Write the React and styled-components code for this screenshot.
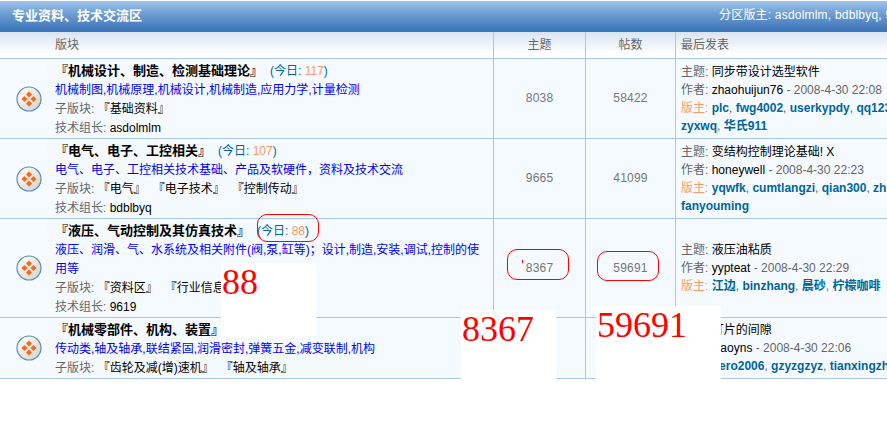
import { createGlobalStyle } from "styled-components";
import styled from "styled-components";

const forums = [
  {
    height: 80,
    title: "『机械设计、制造、检测基础理论』",
    today: 117,
    desc: "机械制图,机械原理,机械设计,机械制造,应用力学,计量检测",
    subs: ["『基础资料』"],
    lead: "asdolmlm",
    topics: 8038,
    posts: 58422,
    subject: "同步带设计选型软件",
    author: "zhaohuijun76",
    date: "2008-4-30 22:08",
    mods: ["plc", "fwg4002", "userkypdy", "qq123456"],
    mods2: ["zyxwq", "华氏911"],
  },
  {
    height: 80,
    title: "『电气、电子、工控相关』",
    today: 107,
    desc: "电气、电子、工控相关技术基础、产品及软硬件，资料及技术交流",
    subs: ["『电气』", "『电子技术』", "『控制传动』"],
    lead: "bdblbyq",
    topics: 9665,
    posts: 41099,
    subject: "变结构控制理论基础! X",
    author: "honeywell",
    date: "2008-4-30 22:23",
    mods: ["yqwfk", "cumtlangzi", "qian300", "zhouyu"],
    mods2: ["fanyouming"],
  },
  {
    height: 99,
    title: "『液压、气动控制及其仿真技术』",
    today: 88,
    desc: "液压、润滑、气、水系统及相关附件(阀,泵,缸等)；设计,制造,安装,调试,控制的使用等",
    subs: ["『资料区』", "『行业信息』"],
    lead: "9619",
    topics: 8367,
    posts: 59691,
    subject: "液压油粘质",
    author: "yypteat",
    date: "2008-4-30 22:29",
    mods: ["江边", "binzhang", "晨砂", "柠檬咖啡"],
  },
  {
    height: 61,
    title: "『机械零部件、机构、装置』",
    today: 52,
    desc: "传动类,轴及轴承,联结紧固,润滑密封,弹簧五金,减变联制,机构",
    subs: ["『齿轮及减(增)速机』", "『轴及轴承』"],
    topics: 7120,
    posts: 40236,
    subject: "打片的间隙",
    author: "xiaoyns",
    date: "2008-4-30 22:06",
    mods: ["hero2006", "gzyzgzyz", "tianxingzhe"],
  },
];

function ForumIcon() {
  return (
    <svg width="26" height="26" viewBox="0 0 26 26">
      <defs>
        <linearGradient id="knob" x1="0" y1="0" x2="1" y2="1">
          <stop offset="0" stopColor="#ffffff" />
          <stop offset="1" stopColor="#d4d2d0" />
        </linearGradient>
      </defs>
      <circle cx="13" cy="13" r="12" fill="url(#knob)" stroke="#5f8fa8" strokeWidth="1.2" />
      <g fill="#f9690e">
        <path d="M13 5.5l3 3-3 3-3-3z" />
        <path d="M13 14.5l3 3-3 3-3-3z" />
        <path d="M8.5 10l3 3-3 3-3-3z" />
        <path d="M17.5 10l3 3-3 3-3-3z" />
      </g>
    </svg>
  );
}

function Mods({ names }) {
  return names.map((n, i) => (
    <span key={n}>
      {i > 0 && ", "}
      <ModName>{n}</ModName>
    </span>
  ));
}

export default function App() {
  return (
    <Page>
      <GlobalStyle />
      <Banner>
        <BannerTitle>专业资料、技术交流区</BannerTitle>
        <BannerMods>分区版主: asdolmlm, bdblbyq, 9619</BannerMods>
      </Banner>
      <Board>
        <colgroup>
          <col width="55" />
          <col width="439" />
          <col width="92" />
          <col width="90" />
          <col width="211" />
        </colgroup>
        <thead>
          <tr>
            <HeadCell colSpan={2} $pad>
              版块
            </HeadCell>
            <HeadCell $center>主题</HeadCell>
            <HeadCell $center>帖数</HeadCell>
            <HeadCell $last>最后发表</HeadCell>
          </tr>
        </thead>
        <tbody>
          {forums.map((f) => (
            <Row key={f.title} $height={f.height}>
              <IconCell>
                <ForumIcon />
              </IconCell>
              <ForumCell>
                <Line>
                  <ForumTitle>{f.title}</ForumTitle>
                  <Today>
                    (今日: <em>{f.today}</em>)
                  </Today>
                </Line>
                <Desc>{f.desc}</Desc>
                <Line>
                  子版块:{" "}
                  <SubList>
                    {f.subs.map((s) => (
                      <Dark key={s}>{s}</Dark>
                    ))}
                  </SubList>
                </Line>
                {f.lead && (
                  <Line>
                    技术组长: <Dark>{f.lead}</Dark>
                  </Line>
                )}
              </ForumCell>
              <CountCell>{f.topics}</CountCell>
              <CountCell>{f.posts}</CountCell>
              <LastCell>
                <LastLine>
                  主题: <Dark>{f.subject}</Dark>
                </LastLine>
                <LastLine>
                  作者: <Dark>{f.author}</Dark> - {f.date}
                </LastLine>
                <LastLine>
                  <Orange>版主:</Orange> <Mods names={f.mods} />
                </LastLine>
                {f.mods2 && (
                  <LastLine>
                    <Mods names={f.mods2} />
                  </LastLine>
                )}
              </LastCell>
            </Row>
          ))}
        </tbody>
      </Board>

      <Ring $x={257} $y={214} $w={62} $h={28} />
      <Ring $x={507} $y={249} $w={62} $h={31} />
      <Ring $x={597} $y={251} $w={62} $h={30} />
      <Speck />
      <Note $x={221} $y={263} $w={95} $h={74}>
        88
      </Note>
      <Note $x={461} $y={310} $w={95} $h={69}>
        8367
      </Note>
      <Note $x={596} $y={306} $w={125} $h={73}>
        59691
      </Note>
    </Page>
  );
}

const GlobalStyle = createGlobalStyle`
  html, body {
    margin: 0;
    padding: 0;
    background: #fff;
    overflow: hidden;
  }
  body {
    font: 12px/19px "Liberation Sans", "Noto Sans CJK SC", sans-serif;
    color: #666;
  }
`;

const Page = styled.div`
  position: relative;
  width: 887px;
  height: 432px;
  overflow: hidden;
  padding-top: 1px;
  box-sizing: border-box;
`;

const Banner = styled.div`
  display: flex;
  align-items: center;
  height: 29px;
  border-bottom: 2px solid #3a77ba;
  background: linear-gradient(#9fc4ec, #6c9dd3 45%, #3f76b8);
  color: #fff;
  white-space: nowrap;
`;

const BannerTitle = styled.div`
  width: 707px;
  flex: none;
  box-sizing: border-box;
  padding-left: 12px;
  font-size: 13px;
  font-weight: bold;
`;

const BannerMods = styled.div`
  padding: 0 0 0 12px;
  letter-spacing: 0.2px;
`;

const Board = styled.table`
  width: 887px;
  table-layout: fixed;
  border-collapse: separate;
  border-spacing: 0;
`;

const HeadCell = styled.th`
  height: 26px;
  padding: 0 ${(p) => (p.$last ? "0 0 5px" : "0")};
  padding-left: ${(p) => (p.$pad ? "55px" : p.$last ? "5px" : "0")};
  text-align: ${(p) => (p.$center ? "center" : "left")};
  font-weight: normal;
  color: #666;
  background: linear-gradient(#d9e4f2, #ffffff 85%);
  border-bottom: 1px solid #a9c8e8;
  border-right: ${(p) => (p.$last ? "0" : "1px solid #a9c8e8")};
`;

const Row = styled.tr`
  height: ${(p) => p.$height}px;
  background: #f5faff;
`;

const BodyCell = styled.td`
  padding: 0;
  border-bottom: 1px solid #a9c8e8;
`;

const IconCell = styled(BodyCell)`
  padding-left: 16px;
  text-align: left;
  vertical-align: middle;
  line-height: 0;
`;

const ForumCell = styled(BodyCell)`
  padding: 1px 5px 0 0;
  border-right: 1px solid #a9c8e8;
  vertical-align: middle;
`;

const CountCell = styled(BodyCell)`
  text-align: center;
  letter-spacing: 0.2px;
  color: #777;
  border-right: 1px solid #a9c8e8;
`;

const LastCell = styled(BodyCell)`
  padding-left: 5px;
  overflow: hidden;
  white-space: nowrap;
`;

const Line = styled.div`
  line-height: 19px;
`;

const LastLine = styled.div`
  line-height: 18px;
`;

const ForumTitle = styled.strong`
  margin-right: 7px;
  font-size: 13px;
  color: #000;
`;

const Today = styled.span`
  color: #069;
  & em {
    font-style: normal;
    color: #f96;
  }
`;

const Desc = styled.div`
  line-height: 19px;
  color: #00f;
`;

const SubList = styled.span`
  display: inline-flex;
  gap: 7px;
`;

const Dark = styled.span`
  color: #000;
`;

const Orange = styled.span`
  color: #f96;
`;

const ModName = styled.b`
  color: #069;
`;

const Ring = styled.div`
  position: absolute;
  left: ${(p) => p.$x}px;
  top: ${(p) => p.$y}px;
  width: ${(p) => p.$w}px;
  height: ${(p) => p.$h}px;
  box-sizing: border-box;
  border: 1px solid #f00;
  border-radius: 10px;
`;

const Speck = styled.div`
  position: absolute;
  left: 522px;
  top: 260px;
  width: 1px;
  height: 3px;
  background: #f00;
`;

const Note = styled.div`
  position: absolute;
  left: ${(p) => p.$x}px;
  top: ${(p) => p.$y}px;
  width: ${(p) => p.$w}px;
  height: ${(p) => p.$h}px;
  box-sizing: border-box;
  padding-left: 1px;
  background: #fff;
  color: #f00;
  font: 36px/38px "Liberation Serif", serif;
`;
